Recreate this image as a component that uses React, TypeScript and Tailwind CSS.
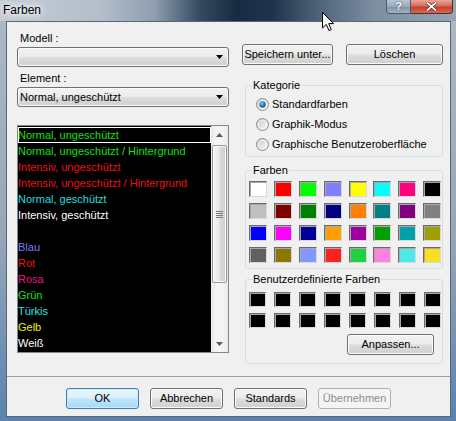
import React from "react";

const items: { t: string; c: string; sel?: boolean }[] = [
  { t: "Normal, ungeschützt", c: "text-[#12e012]", sel: true },
  { t: "Normal, ungeschützt / Hintergrund", c: "text-[#12e012]" },
  { t: "Intensiv, ungeschützt", c: "text-[#ee1010]" },
  { t: "Intensiv, ungeschützt / Hintergrund", c: "text-[#ee1010]" },
  { t: "Normal, geschützt", c: "text-[#22dede]" },
  { t: "Intensiv, geschützt", c: "text-white" },
  { t: "", c: "text-white" },
  { t: "Blau", c: "text-[#7c7cf4]" },
  { t: "Rot", c: "text-[#ee1010]" },
  { t: "Rosa", c: "text-[#ea1280]" },
  { t: "Grün", c: "text-[#12e012]" },
  { t: "Türkis", c: "text-[#22e4e4]" },
  { t: "Gelb", c: "text-[#f2f200]" },
  { t: "Weiß", c: "text-white" },
];

const colors = [
  "bg-[#ffffff]", "bg-[#ff0000]", "bg-[#00ff00]", "bg-[#8080ff]", "bg-[#ffff00]", "bg-[#00ffff]", "bg-[#ff0080]", "bg-[#000000]",
  "bg-[#c0c0c0]", "bg-[#800000]", "bg-[#008000]", "bg-[#000080]", "bg-[#ff8000]", "bg-[#008080]", "bg-[#800080]", "bg-[#808080]",
  "bg-[#0000ff]", "bg-[#ff00ff]", "bg-[#000098]", "bg-[#ffa000]", "bg-[#a000a0]", "bg-[#00a000]", "bg-[#00a0a8]", "bg-[#a0a000]",
  "bg-[#606060]", "bg-[#8c7800]", "bg-[#8098ff]", "bg-[#ff2020]", "bg-[#20d040]", "bg-[#ff80e0]", "bg-[#50e8e8]", "bg-[#f8e020]",
];

function Btn({ children, className = "" }: { children: React.ReactNode; className?: string }) {
  return (
    <div
      className={`flex h-[21px] items-center justify-center rounded-[3px] border border-[#707070] bg-[linear-gradient(#f2f2f2_0%,#ebebeb_48%,#dddddd_52%,#cfcfcf_100%)] shadow-[inset_0_0_0_1px_#fbfbfb] text-black ${className}`}
    >
      {children}
    </div>
  );
}

function Combo({ text }: { text: string }) {
  return (
    <div className="flex h-[20px] items-center justify-between rounded-[3px] border border-[#707070] bg-[linear-gradient(#f2f2f2_0%,#ebebeb_48%,#dddddd_52%,#cfcfcf_100%)] pl-[2px] pr-[5px] shadow-[inset_0_0_0_1px_#fbfbfb]">
      <span className="leading-[15px]">{text}</span>
      <svg width="7" height="4" viewBox="0 0 7 4">
        <path d="M0 0 H7 L3.5 4 Z" fill="#000" />
      </svg>
    </div>
  );
}

function Radio({ label, checked, id }: { label: string; checked?: boolean; id: string }) {
  return (
    <div className="flex h-[20px] items-center gap-[3px] pl-[10px]">
      <svg width="13" height="13" viewBox="0 0 13 13">
        <defs>
          <linearGradient id={`g${id}`} x1="0" y1="0" x2="1" y2="1">
            <stop offset="0" stopColor="#c9ccd1" />
            <stop offset="1" stopColor="#f7f7f7" />
          </linearGradient>
          <radialGradient id={`d${id}`} cx="0.4" cy="0.35" r="0.7">
            <stop offset="0" stopColor="#8cc7f2" />
            <stop offset="0.6" stopColor="#2c73b4" />
            <stop offset="1" stopColor="#1a4f86" />
          </radialGradient>
        </defs>
        <circle cx="6.5" cy="6.5" r="6" fill={`url(#g${id})`} stroke="#8b8d90" />
        <circle cx="6.5" cy="6.5" r="4.2" fill="none" stroke="#ffffff" strokeOpacity="0.6" />
        {checked && <circle cx="6.5" cy="6.5" r="3.2" fill={`url(#d${id})`} />}
      </svg>
      <span className="leading-[15px]">{label}</span>
    </div>
  );
}

function Swatch({ c, big }: { c: string; big?: boolean }) {
  return (
    <div
      className={`${big ? "h-[16px] w-[18px]" : "h-[15px] w-[17px]"} border border-t-[#6a6a6a] border-l-[#6a6a6a] border-b-[#d8d8d8] border-r-[#d8d8d8] ${c} shadow-[inset_1px_1px_0_#a8a8a8]`}
    />
  );
}

function Arrow({ up }: { up?: boolean }) {
  return (
    <div className="flex h-[17px] items-center justify-center">
      <svg width="7" height="4" viewBox="0 0 7 4">
        <path d={up ? "M0 4 H7 L3.5 0 Z" : "M0 0 H7 L3.5 4 Z"} fill="#5a5a5a" />
      </svg>
    </div>
  );
}

export default function App() {
  return (
    <div className="relative flex h-[421px] w-[456px] flex-col overflow-hidden bg-[linear-gradient(180deg,#aeb9c5_0%,#97a7b8_55%,#5b83ad_100%)] font-['Liberation_Sans',Arial,sans-serif] text-[11px] text-black">
      {/* title bar */}
      <div className="flex h-[21px] items-center bg-[linear-gradient(90deg,#c3ccd5_0%,#b3bec9_22%,#8e9db0_34%,#34495f_44%,#172a41_52%,#20354d_60%,#506479_70%,#7d8ea1_82%,#96a4b3_100%)] pl-[3px]">
        <span className="text-[12px] leading-[15px] text-black [text-shadow:0_0_5px_#fff,0_0_9px_#fff,0_0_12px_#fff]">Farben</span>
      </div>

      {/* caption buttons */}
      <div className="absolute right-[3px] top-0 flex h-[14px]">
        <div className="flex w-[25px] items-center justify-center rounded-bl-[4px] border border-t-0 border-[#4a5a6d] bg-[linear-gradient(#b9c5d2_0%,#9aabbd_50%,#7d90a6_51%,#a0b3c6_100%)] text-[11px] font-bold leading-none text-white [text-shadow:0_0_2px_#24364a]">
          ?
        </div>
        <div className="flex w-[42px] items-center justify-center rounded-br-[4px] border border-l-0 border-t-0 border-[#5a2a25] bg-[linear-gradient(#e9a99c_0%,#d66b59_45%,#c0412e_55%,#d86a50_100%)]">
          <svg width="11" height="9" viewBox="0 0 11 9">
            <path d="M1 0.5 L10 8.5 M10 0.5 L1 8.5" stroke="#3b1410" strokeWidth="3" />
            <path d="M1 0.5 L10 8.5 M10 0.5 L1 8.5" stroke="#ffffff" strokeWidth="1.8" />
          </svg>
        </div>
      </div>

      {/* cursor */}
      <svg className="absolute left-[322px] top-[12px]" width="13" height="20" viewBox="0 0 13 20">
        <path d="M0.5 0.5 V16 L4.3 12.4 L7 18.6 L9.3 17.6 L6.7 11.6 L11.6 11.6 Z" fill="#fff" stroke="#000" strokeWidth="1" strokeLinejoin="round" />
      </svg>

      {/* client */}
      <div className="ml-[6px] mr-[5px] flex h-[396px] flex-col border border-[#56677a] bg-[#f0f0f0]">
        <div className="flex h-[354px] gap-[13px] pl-[10px] pt-[9px]">
          {/* left column */}
          <div className="flex w-[212px] flex-col">
            <div className="h-[15px] pl-[3px] leading-[15px]">Modell :</div>
            <div className="mt-[1px]">
              <Combo text="" />
            </div>
            <div className="mt-[4px] h-[15px] pl-[3px] leading-[15px]">Element :</div>
            <div className="mt-[1px]">
              <Combo text="Normal, ungeschützt" />
            </div>
            <div className="mt-[18px] flex h-[228px] border border-[#828790] bg-black">
              <div className="flex flex-1 flex-col pt-[1px]">
                {items.map((it, i) => (
                  <div
                    key={i}
                    className={`h-[16px] leading-[16px] ${it.c} ${it.sel ? "shadow-[inset_0_0_0_1px_#ffffff]" : ""}`}
                  >
                    {it.t}
                  </div>
                ))}
              </div>
              <div className="flex w-[17px] flex-col bg-[linear-gradient(90deg,#e5e5e5_0%,#f4f4f4_30%,#f4f4f4_70%,#e8e8e8_100%)]">
                <Arrow up />
                <div className="flex flex-1 flex-col items-center">
                  <div className="mt-[2px] flex h-[138px] w-[15px] items-center justify-center rounded-[2px] border border-[#979797] bg-[linear-gradient(90deg,#f4f4f4_0%,#eaeaea_45%,#dadada_55%,#cfcfcf_100%)] shadow-[inset_0_0_0_1px_#f8f8f8]">
                    <div className="flex w-[7px] flex-col gap-[1px]">
                      <div className="h-[1px] bg-[#7a7a7a]" />
                      <div className="h-[1px] bg-[#7a7a7a]" />
                      <div className="h-[1px] bg-[#7a7a7a]" />
                      <div className="h-[1px] bg-[#7a7a7a]" />
                    </div>
                  </div>
                </div>
                <Arrow />
              </div>
            </div>
          </div>

          {/* right column */}
          <div className="flex w-[201px] flex-col">
            <div className="mt-[13px] flex gap-[13px]">
              <Btn className="w-[91px]">Speichern unter...</Btn>
              <Btn className="w-[97px]">Löschen</Btn>
            </div>

            <fieldset className="ml-[3px] mt-[13px] h-[79px] w-[198px] rounded-[3px] border border-[#d5dfe5]">
              <legend className="ml-[6px] px-[1px] leading-[15px]">Kategorie</legend>
              <div className="pt-[1px]">
                <Radio id="a" label="Standardfarben" checked />
                <Radio id="b" label="Graphik-Modus" />
                <Radio id="c" label="Graphische Benutzeroberfläche" />
              </div>
            </fieldset>

            <fieldset className="ml-[3px] mt-[6px] h-[106px] w-[198px] rounded-[3px] border border-[#d5dfe5]">
              <legend className="ml-[6px] px-[1px] leading-[15px]">Farben</legend>
              <div className="grid grid-cols-8 gap-x-[6px] gap-y-[6px] pl-[3px] pt-[3px]">
                {colors.map((c, i) => (
                  <Swatch key={i} c={c} big />
                ))}
              </div>
            </fieldset>

            <fieldset className="ml-[3px] mt-[3px] h-[92px] w-[198px] rounded-[3px] border border-[#d5dfe5]">
              <legend className="ml-[6px] px-[1px] leading-[15px]">Benutzerdefinierte Farben</legend>
              <div className="grid grid-cols-8 gap-x-[7px] gap-y-[6px] pl-[3px] pt-[5px]">
                {Array.from({ length: 16 }).map((_, i) => (
                  <Swatch key={i} c="bg-black" />
                ))}
              </div>
              <div className="mt-[6px] flex justify-end pr-[8px]">
                <Btn className="w-[87px]">Anpassen...</Btn>
              </div>
            </fieldset>
          </div>
        </div>

        {/* bottom buttons */}
        <div className="flex flex-1 justify-center gap-[11px] border-t border-[#a0a0a0] pt-[11px]">
          <div className="flex h-[21px] w-[73px] items-center justify-center rounded-[3px] border border-[#3c7fb1] bg-[linear-gradient(#eaf6fd_0%,#d9f0fc_48%,#bee6fd_52%,#a7d9f5_100%)] shadow-[inset_0_0_0_1px_#c8ecfd]">
            OK
          </div>
          <Btn className="w-[73px]">Abbrechen</Btn>
          <Btn className="w-[73px]">Standards</Btn>
          <div className="flex h-[21px] w-[73px] items-center justify-center rounded-[3px] border border-[#adb2b5] bg-[#f4f4f4] text-[#8c8c8c]">
            Übernehmen
          </div>
        </div>
      </div>
    </div>
  );
}
